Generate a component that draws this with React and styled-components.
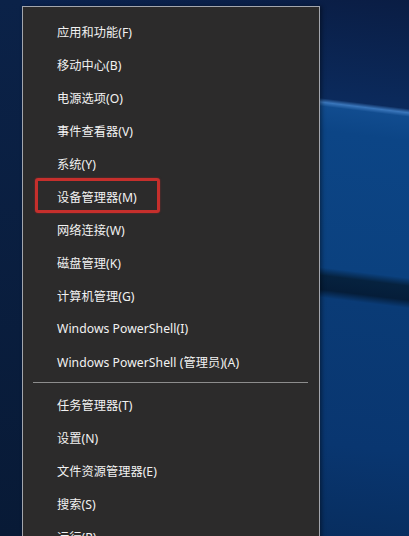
import React from "react";
import styled, { createGlobalStyle } from "styled-components";

const Global = createGlobalStyle`
  html, body { margin: 0; padding: 0; background: #0a1f40; }
  body { font-family: "Noto Sans", "Noto Sans CJK SC", sans-serif; }
`;

const Desktop = styled.div`
  width: 409px;
  height: 536px;
  overflow: hidden;
  box-sizing: border-box;
  padding: 6px 0 0 22px;
  background:
    linear-gradient(180deg, #0b2248 0, #081a36 536px) left top / 22px 100% no-repeat,
    linear-gradient(187deg,
      #0a1d44 0, #0b2a5c 108px, #3a76bb 112px, #114c8f 116px, #0c4586 140px,
      #0b417f 276px, #06223f 284px, #051d39 298px, #0a3b76 306px,
      #093670 450px, #072a58 582px);
`;

const Menu = styled.div`
  width: 298px;
  min-height: 560px;
  box-sizing: border-box;
  background: #2c2b2b;
  border: 1px solid #a3a6ad;
  border-bottom: none;
  padding: 8px 0 0;
  box-shadow: 2px 0 4px rgba(0, 0, 0, 0.4);
`;

const Item = styled.div`
  position: relative;
  height: 33px;
  display: flex;
  align-items: center;
  padding-left: 34px;
  color: #f2f2f2;
  font-size: 12.2px;
  letter-spacing: 0.05px;
  white-space: nowrap;
`;

const Highlight = styled.div`
  position: absolute;
  left: 12px;
  top: -2px;
  width: 125px;
  height: 35px;
  box-sizing: border-box;
  border: 3px solid #c62f2c;
  border-radius: 3px;
  box-shadow: 0 0 2px rgba(200, 40, 40, 0.6);
`;

const Separator = styled.div`
  height: 1px;
  margin: 4px 11px 5px 10px;
  background: #8d8d8d;
`;

const top = [
  "应用和功能(F)",
  "移动中心(B)",
  "电源选项(O)",
  "事件查看器(V)",
  "系统(Y)",
  "设备管理器(M)",
  "网络连接(W)",
  "磁盘管理(K)",
  "计算机管理(G)",
  "Windows PowerShell(I)",
  "Windows PowerShell (管理员)(A)",
];

const bottom = ["任务管理器(T)", "设置(N)", "文件资源管理器(E)", "搜索(S)", "运行(R)"];

export default function App() {
  return (
    <>
      <Global />
      <Desktop>
        <Menu>
          {top.map((t) => (
            <Item key={t}>
              {t === "设备管理器(M)" && <Highlight />}
              {t}
            </Item>
          ))}
          <Separator />
          {bottom.map((t) => (
            <Item key={t}>{t}</Item>
          ))}
        </Menu>
      </Desktop>
    </>
  );
}
